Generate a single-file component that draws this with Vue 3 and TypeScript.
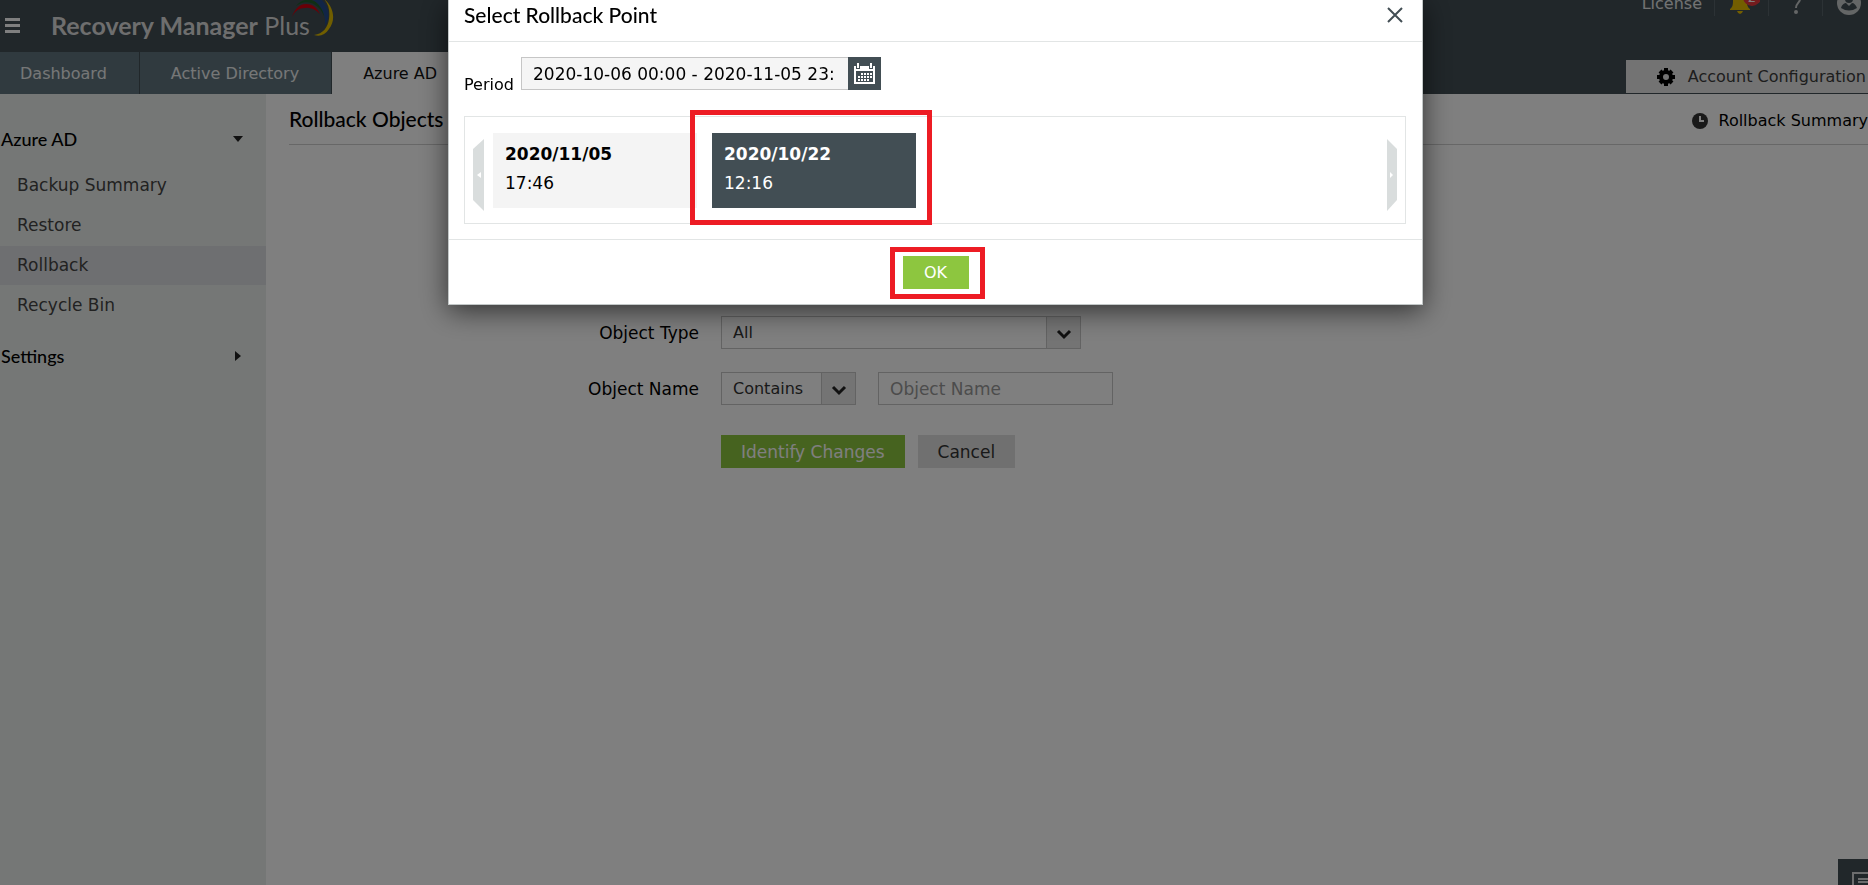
<script setup lang="ts">
import { ref } from 'vue'

interface RollbackPoint {
  date: string
  time: string
}

const tabs = ['Dashboard', 'Active Directory', 'Azure AD']
const activeTab = ref('Azure AD')
const sideItems = ['Backup Summary', 'Restore', 'Rollback', 'Recycle Bin']
const activeItem = ref('Rollback')
const points: RollbackPoint[] = [
  { date: '2020/11/05', time: '17:46' },
  { date: '2020/10/22', time: '12:16' },
]
const selected = ref(1)
const period = ref('2020-10-06 00:00 - 2020-11-05 23:59')
const objectType = ref('All')
const matcher = ref('Contains')
const objectName = ref('')
</script>

<template>
  <div class="page">
    <header class="topbar">
      <button class="menu" aria-label="Menu"><i></i><i></i><i></i></button>
      <a class="logo" href="#">
        <b>Recovery Manager</b> <span>Plus</span>
        <svg class="swoosh" width="46" height="38" viewBox="0 0 46 38" aria-hidden="true">
          <path d="M4 17C7 8 12 4 18 4C25 4 29 8 32 14C27 9 22 7 17 8C11 8 7 11 4 17Z" fill="#d2000f" />
          <path d="M8 6C13 0 20-2 26 1C32 4 36 9 36 16C33 9 29 5 23 3C17 1 13 3 8 6Z" fill="#1c5f2b" />
          <path d="M19-1H33C41 7 43 16 37 26C38 17 35 9 29 3C26 0 23-1 19-1Z" fill="#234a8c" />
          <path d="M36-1C46 7 48 20 41 29C37 35 32 37 26 35C35 34 40 27 41 19C42 11 41 5 36-1Z" fill="#e0bc00" />
        </svg>
      </a>
      <nav class="tools">
        <a href="#" class="license">License</a>
        <button class="tool" aria-label="Notifications">
          <svg width="36" height="24" viewBox="0 0 36 24" aria-hidden="true">
            <path d="M6 17C9 15 9 12 9 8C9 4 12 2 16 2S23 4 23 8C23 12 23 15 26 17V18H6Z" fill="#e6bd00" />
            <path d="M13 19H19Q18 22 16 22Q14 22 13 19Z" fill="#e6bd00" />
            <circle cx="28" cy="5" r="9" fill="#e8383d" />
            <text x="28" y="10" text-anchor="middle" font-size="13" fill="#fff" font-family="DejaVu Sans, sans-serif">2</text>
          </svg>
        </button>
        <button class="tool" aria-label="Help">
          <svg width="20" height="24" viewBox="0 0 20 24" fill="none" stroke="#c9cccd" stroke-width="2" aria-hidden="true">
            <path d="M6 7C6 2 14 2 14 7C14 11 10 11 10 16" />
            <circle cx="10" cy="20" r="1" fill="#c9cccd" />
          </svg>
        </button>
        <button class="tool last" aria-label="Account">
          <svg width="24" height="24" viewBox="0 0 24 24" aria-hidden="true">
            <circle cx="12" cy="11" r="12" fill="#c9cccd" />
            <circle cx="12" cy="7" r="4" fill="#424e54" />
            <path d="M4 16C5 12 8 11 9 11L12 14L15 11C17 11 19 13 20 16Q12 21 4 16Z" fill="#424e54" />
          </svg>
        </button>
      </nav>
    </header>

    <div class="tabbar">
      <nav class="tabs">
        <a v-for="t in tabs" :key="t" href="#" :class="{ active: t === activeTab }" @click.prevent="activeTab = t">{{ t }}</a>
      </nav>
      <a href="#" class="config">
        <svg width="20" height="20" viewBox="0 0 20 20" aria-hidden="true">
          <g fill="none" stroke="#000">
            <circle cx="10" cy="10" r="5" stroke-width="4" />
            <path d="M10 1V4M10 16V19M1 10H4M16 10H19M4 4L6 6M14 14L16 16M16 4L14 6M4 16L6 14" stroke-width="4" />
          </g>
        </svg>
        Account Configuration
      </a>
    </div>

    <div class="body">
      <aside class="sidebar">
        <button class="group">
          Azure AD
          <svg width="12" height="12" viewBox="0 0 12 12" aria-hidden="true"><path d="M1 3H11L6 9Z" fill="#222" /></svg>
        </button>
        <ul>
          <li v-for="s in sideItems" :key="s">
            <a href="#" :class="{ active: s === activeItem }" @click.prevent="activeItem = s">{{ s }}</a>
          </li>
        </ul>
        <button class="group">
          Settings
          <svg width="12" height="12" viewBox="0 0 12 12" aria-hidden="true"><path d="M3 1V11L9 6Z" fill="#222" /></svg>
        </button>
      </aside>

      <main class="main">
        <div class="heading">
          <h1>Rollback Objects</h1>
          <a href="#" class="summary">
            <svg width="18" height="18" viewBox="0 0 18 18" aria-hidden="true">
              <circle cx="9" cy="9" r="8" fill="#333" />
              <path d="M9 4V9H13" fill="none" stroke="#fff" stroke-width="2" />
            </svg>
            Rollback Summary
          </a>
        </div>

        <form class="form" @submit.prevent>
          <div class="row">
            <label for="otype">Object Type</label>
            <span class="select wide">
              <select id="otype" v-model="objectType"><option>All</option></select>
              <svg viewBox="0 0 16 12" width="16" height="12" aria-hidden="true"><path d="M2 3L8 9L14 3" /></svg>
            </span>
          </div>
          <div class="row">
            <label for="oname">Object Name</label>
            <span class="select narrow">
              <select v-model="matcher" aria-label="Match"><option>Contains</option></select>
              <svg viewBox="0 0 16 12" width="16" height="12" aria-hidden="true"><path d="M2 3L8 9L14 3" /></svg>
            </span>
            <input id="oname" v-model="objectName" class="name" type="text" placeholder="Object Name" />
          </div>
          <div class="row actions">
            <button class="btn primary" type="submit">Identify Changes</button>
            <button class="btn plain" type="button">Cancel</button>
          </div>
        </form>
      </main>
    </div>

    <button class="chat" aria-label="Feedback">
      <svg width="24" height="20" viewBox="0 0 24 20" fill="none" stroke="#d8dbdc" aria-hidden="true">
        <path d="M1 20V1H24M6 7H24M6 10H24M6 14H24" stroke-width="2" />
      </svg>
    </button>

    <div class="overlay">
      <section class="modal" role="dialog" aria-labelledby="dlg-title">
        <div class="modal-head">
          <h2 id="dlg-title">Select Rollback Point</h2>
          <button class="close" aria-label="Close">
            <svg width="16" height="16" viewBox="0 0 16 16" aria-hidden="true"><path d="M1 1L15 15M15 1L1 15" fill="none" stroke="#424e54" stroke-width="2" /></svg>
          </button>
        </div>
        <div class="modal-body">
          <div class="period">
            <label for="period">Period</label>
            <input id="period" v-model="period" type="text" />
            <button class="cal" aria-label="Choose period">
              <svg width="22" height="22" viewBox="0 0 22 22" aria-hidden="true">
                <path d="M0 3H2V6H6V3H15V6H19V3H21V21H0Z" fill="#fff" />
                <path d="M3 0H5V5H3ZM16 0H18V5H16Z" fill="#fff" />
                <path d="M2 8H19V19H2Z" fill="#424e54" />
                <path d="M7 11H18M4 14H18M4 17H15" stroke="#fff" stroke-width="2" stroke-dasharray="2 1" />
              </svg>
            </button>
          </div>
          <div class="carousel">
            <button class="arrow" aria-label="Previous">
              <svg width="12" height="72" viewBox="0 0 12 72" aria-hidden="true"><path d="M11 0V72L0 61V10Z" fill="#d9dddd" /><path d="M8 33V39L4 36Z" fill="#fff" /></svg>
            </button>
            <div class="cards">
              <button v-for="(p, i) in points" :key="p.date" class="card" :class="{ on: i === selected }" @click="selected = i">
                <strong>{{ p.date }}</strong>
                <span>{{ p.time }}</span>
              </button>
            </div>
            <button class="arrow" aria-label="Next">
              <svg width="12" height="72" viewBox="0 0 12 72" aria-hidden="true"><path d="M1 0V72L11 61V10Z" fill="#d9dddd" /><path d="M4 33V39L7 36Z" fill="#fff" /></svg>
            </button>
          </div>
        </div>
        <div class="modal-foot">
          <span class="ok-wrap"><button class="btn ok">OK</button></span>
        </div>
      </section>
    </div>
  </div>
</template>

<style>
body {
  margin: 0;
  overflow: hidden;
}
</style>

<style scoped>
.page,
.page * {
  box-sizing: border-box;
}
.page {
  display: flex;
  flex-direction: column;
  height: 100vh;
  overflow: hidden;
  background: #fff;
  color: #000;
  font: 16px/20px 'DejaVu Sans', Verdana, sans-serif;
}
a {
  color: inherit;
  text-decoration: none;
}
button {
  border: 0;
  padding: 0;
  background: none;
  color: inherit;
  font: inherit;
  cursor: pointer;
}
svg {
  display: block;
  flex: none;
}
h1,
h2 {
  margin: 0;
  font: 500 21px/24px Lato, sans-serif;
}
.topbar {
  display: flex;
  height: 52px;
  flex: none;
  background: #424e54;
}
.menu {
  display: flex;
  flex-direction: column;
  gap: 3px;
  width: 15px;
  margin: 18px 31px 0 5px;
  align-self: flex-start;
}
.menu i {
  height: 3px;
  background: #fff;
}
.logo {
  position: relative;
  padding-top: 10px;
  color: #dcdcdc;
  font: 25px/30px Lato, sans-serif;
  white-space: nowrap;
}
.swoosh {
  position: absolute;
  top: 0;
  right: -24px;
}
.tools {
  display: flex;
  align-items: center;
  height: 24px;
  margin: -8px 0 0 auto;
  color: #e4e6e7;
}
.license {
  padding-right: 12px;
}
.tool {
  display: flex;
  justify-content: center;
  width: 54px;
  height: 24px;
  border-left: 1px solid #59656b;
}
.tool.last {
  width: 46px;
  padding-left: 6px;
}
.tabbar {
  display: flex;
  align-items: flex-end;
  justify-content: space-between;
  height: 42px;
  flex: none;
  background: #424e54;
}
.tabs {
  display: flex;
}
.tabs a {
  padding: 0 32px 0 31px;
  border-right: 1px solid #424e54;
  background: #60757f;
  color: #eceeef;
  line-height: 43px;
  height: 42px;
}
.tabs a:first-child {
  padding: 0 32px 0 20px;
}
.tabs a.active {
  border: 0;
  background: #fff;
  color: #111;
}
.config {
  display: flex;
  align-items: center;
  gap: 10px;
  height: 33px;
  margin-bottom: 1px;
  padding: 0 2px 0 30px;
  background: #e6e6e6;
  color: #3c3c3c;
  white-space: nowrap;
}
.config svg {
  margin-right: 2px;
}
.body {
  display: flex;
  flex: 1;
}
.sidebar {
  width: 266px;
  flex: none;
  padding-top: 27px;
  background: #ebefed;
}
.group {
  display: flex;
  align-items: center;
  justify-content: space-between;
  width: 100%;
  padding: 0 22px 0 1px;
  font: 500 18px/36px Lato, sans-serif;
}
.sidebar ul {
  margin: 9px 0 13px;
  padding: 0;
  list-style: none;
}
.sidebar li a {
  display: block;
  margin-bottom: 1px;
  padding-left: 17px;
  color: #444;
  font-size: 17px;
  line-height: 39px;
}
.sidebar li a.active {
  background: #dcdee2;
}
.main {
  flex: 1;
  min-width: 0;
  padding-left: 23px;
}
.heading {
  display: flex;
  align-items: flex-start;
  justify-content: space-between;
  height: 51px;
  padding-top: 13px;
  border-bottom: 1px solid #cfcfcf;
}
.summary {
  display: flex;
  align-items: center;
  gap: 9px;
  padding-top: 4px;
  white-space: nowrap;
}
.form {
  display: flex;
  flex-direction: column;
  gap: 23px;
  padding-top: 171px;
  font-size: 17px;
}
.row {
  display: flex;
  align-items: center;
}
.row label {
  width: 410px;
  margin-right: 22px;
  text-align: right;
}
.select {
  position: relative;
}
.select select {
  width: 100%;
  height: 33px;
  padding: 0 11px;
  border: 1px solid #c6c6c6;
  border-radius: 0;
  appearance: none;
  background: linear-gradient(#c6c6c6, #c6c6c6) right 33px top / 1px 100% no-repeat,
    linear-gradient(#e9e9e9, #e9e9e9) right / 33px 100% no-repeat, #fff;
  color: #333;
  font: inherit;
  font-size: 16px;
}
.select svg {
  position: absolute;
  top: 12px;
  right: 9px;
  fill: none;
  stroke: #222;
  stroke-width: 3;
  pointer-events: none;
}
.wide {
  width: 360px;
}
.narrow {
  width: 135px;
}
.name {
  width: 235px;
  height: 33px;
  margin-left: 22px;
  padding: 0 11px;
  border: 1px solid #c6c6c6;
  background: #fff;
  font: inherit;
}
.name::placeholder {
  color: #999;
}
.actions {
  gap: 13px;
  margin-top: 7px;
  padding-left: 432px;
}
.btn {
  height: 33px;
  padding: 0 20px;
}
.primary,
.ok {
  background: #8dc63f;
  color: #fff;
}
.plain {
  background: #e1e1e1;
  color: #333;
}
.chat {
  position: fixed;
  right: 0;
  bottom: 0;
  width: 30px;
  height: 26px;
  padding: 13px 0 0 14px;
  overflow: hidden;
  background: #424e54;
}
.overlay {
  position: fixed;
  inset: 0;
  display: flex;
  align-items: flex-start;
  justify-content: center;
  padding-left: 3px;
  background: rgba(0, 0, 0, 0.5);
}
.modal {
  width: 975px;
  border: 1px solid #c3c8c8;
  border-top: 0;
  background: #fff;
  box-shadow: 0 6px 26px rgba(0, 0, 0, 0.6);
}
.modal-head {
  display: flex;
  align-items: flex-start;
  justify-content: space-between;
  height: 42px;
  padding: 3px 19px 0 15px;
  border-bottom: 1px solid #e2e5e5;
}
.close {
  padding-top: 4px;
}
.modal-body {
  padding: 15px 16px 15px 15px;
}
.period {
  display: flex;
  align-items: flex-start;
}
.period label {
  width: 57px;
  padding-top: 18px;
}
.period input {
  width: 327px;
  height: 33px;
  padding: 0 15px 0 11px;
  border: 1px solid #c6c6c6;
  border-right: 0;
  background: #f5f5f5;
  font: inherit;
  font-size: 17px;
}
.cal {
  display: flex;
  align-items: center;
  justify-content: center;
  width: 33px;
  height: 33px;
  background: #424e54;
}
.carousel {
  display: flex;
  align-items: center;
  justify-content: space-between;
  height: 108px;
  margin-top: 21px;
  padding: 0 7px 0 8px;
  border: 1px solid #e2e5e5;
}
.arrow {
  padding-top: 9px;
}
.cards {
  display: flex;
  flex: 1;
  gap: 15px;
  padding-left: 8px;
}
.card {
  display: flex;
  flex-direction: column;
  gap: 5px;
  width: 204px;
  height: 75px;
  padding: 9px 12px 13px;
  background: #f4f4f4;
  font-size: 17px;
  line-height: 24px;
  text-align: left;
}
.card.on {
  position: relative;
  background: #424e54;
  color: #fff;
}
/* Highlight frames around the selected point and the confirm button */
.card.on::after,
.ok-wrap::after {
  content: '';
  position: absolute;
  border: 5px solid #ed1c24;
  pointer-events: none;
}
.card.on::after {
  inset: -23px -16px -17px -22px;
}
.modal-foot {
  display: flex;
  justify-content: center;
  padding: 16px 0 15px;
  border-top: 1px solid #e2e5e5;
}
.ok-wrap {
  position: relative;
}
.ok-wrap::after {
  inset: -9px -16px -10px -13px;
}
.ok {
  display: block;
  width: 66px;
}
</style>
